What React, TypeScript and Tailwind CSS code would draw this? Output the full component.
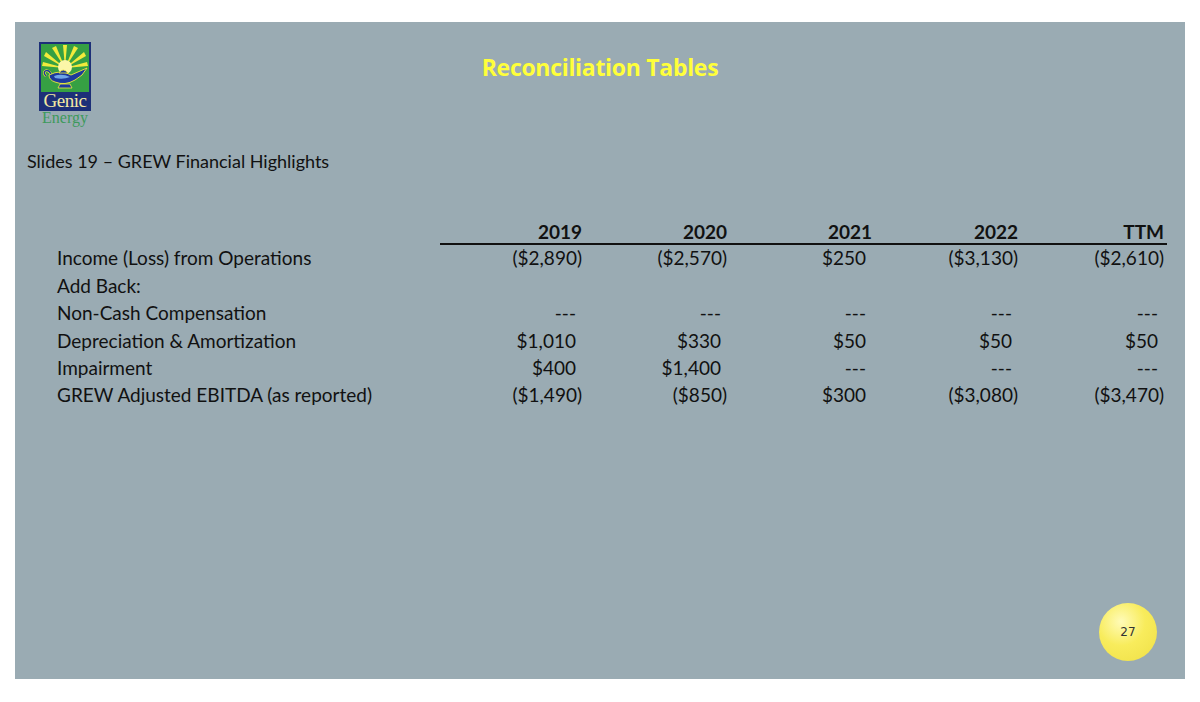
const rows: { label: string; values: string[] }[] = [
  { label: "Income (Loss) from Operations", values: ["($2,890)", "($2,570)", "$250", "($3,130)", "($2,610)"] },
  { label: "Add Back:", values: ["", "", "", "", ""] },
  { label: "Non-Cash Compensation", values: ["---", "---", "---", "---", "---"] },
  { label: "Depreciation & Amortization", values: ["$1,010", "$330", "$50", "$50", "$50"] },
  { label: "Impairment", values: ["$400", "$1,400", "---", "---", "---"] },
  { label: "GREW Adjusted EBITDA (as reported)", values: ["($1,490)", "($850)", "$300", "($3,080)", "($3,470)"] },
];

const years = ["2019", "2020", "2021", "2022", "TTM"];

const Logo = () => (
  <div className="ml-[24px] flex w-[52px] flex-col items-center">
    <div className="w-[52px] border-2 border-[#1d2f78] bg-[#1d2f78]">
      <svg viewBox="0 0 48 48" className="block h-[48px] w-[48px]">
        <rect width="48" height="48" fill="#36a043" />
        {/* sun rays */}
        <g fill="#f2ea3c">
          <polygon points="24,24 22,1 26,1" />
          <polygon points="24,24 11,4 15,2" />
          <polygon points="24,24 33,2 37,4" />
          <polygon points="24,24 3,12 5,8" />
          <polygon points="24,24 43,8 45,12" />
          <polygon points="24,24 1,22 2,18" />
          <polygon points="24,24 46,18 47,22" />
        </g>
        <circle cx="24" cy="23" r="7" fill="#fbf6a8" />
        {/* lamp */}
        <path d="M5 32 C 0 27 7 24 10 30" fill="none" stroke="#f2ea3c" strokeWidth="2.6" />
        <path d="M5 32 C 0 27 7 24 10 30" fill="none" stroke="#1c3a9c" strokeWidth="1.4" />
        <path d="M8 31 Q 20 25 30 31 L 46 24 Q 42 32 34 36 Q 24 42 14 38 Q 8 36 8 31 Z" fill="#1c3a9c" stroke="#f2ea3c" strokeWidth="0.9" />
        <path d="M13 32 Q 21 29 29 33 Q 22 36 14 34 Z" fill="#6fa6e8" />
        <path d="M18 29 Q 22 23 27 29 Z" fill="#1c3a9c" stroke="#f2ea3c" strokeWidth="0.8" />
        <path d="M19 40 L 29 40 L 31 44 L 17 44 Z" fill="#1c3a9c" stroke="#f2ea3c" strokeWidth="0.8" />
      </svg>
      <div className="flex h-[17px] items-center justify-center text-[19px] leading-none tracking-[-0.5px] text-[#f3e9a2] [font-family:'Liberation_Serif',serif]">
        Genic
      </div>
    </div>
    <div className="mt-[-1px] text-[16px] leading-[15px] text-[#3d9a5c] [font-family:'Liberation_Serif',serif]">
      Energy
    </div>
  </div>
);

export default function App() {
  return (
    <div className="min-h-[702px] bg-white pl-[15px] pt-[22px]">
      <div className="flex h-[657px] w-[1170px] flex-col bg-[#9aabb3]">
        <div className="grid grid-cols-[1fr_auto_1fr] pt-[20px]">
          <Logo />
          <h1 className="mt-[11px] text-[23px] font-bold leading-[28px] tracking-[-0.3px] text-[#ffff3a] [font-family:'Open_Sans',sans-serif]">
            Reconciliation Tables
          </h1>
          <div />
        </div>

        <p className="ml-[12px] mt-[26px] text-[18px] leading-[20px] text-[#111] [font-family:Lato,sans-serif]">
          Slides 19 – GREW Financial Highlights
        </p>

        <div className="ml-[42px] mt-[50px] grid grid-cols-[383px_142px_145px_145px_146px_149px] text-[19px] text-[#111] [font-family:Lato,sans-serif]">
          <div className="h-[24px]" />
          {years.map((y, i) => (
            <div
              key={y}
              className={`flex h-[24px] items-center justify-end border-b-2 border-[#111] font-bold ${i === 4 ? "pr-[3px]" : ""}`}
            >
              {y}
            </div>
          ))}
          {rows.map((row) => (
            <div key={row.label} className="contents">
              <div className="flex h-[27.4px] items-center">{row.label}</div>
              {row.values.map((v, i) => (
                <div
                  key={i}
                  className={`flex h-[27.4px] items-center justify-end ${v.startsWith("(") ? "" : "pr-[6px]"} ${i === 4 ? "mr-[3px]" : ""}`}
                >
                  {v}
                </div>
              ))}
            </div>
          ))}
        </div>

        <div className="mt-auto flex justify-end pb-[18px] pr-[28px]">
          <div className="flex h-[58px] w-[58px] items-center justify-center rounded-full bg-[radial-gradient(circle_at_38%_32%,#fffbb8_0%,#f8ec5c_45%,#efdf45_100%)] text-[12px] text-[#333] [font-family:'DejaVu_Sans',sans-serif]">
            27
          </div>
        </div>
      </div>
    </div>
  );
}
